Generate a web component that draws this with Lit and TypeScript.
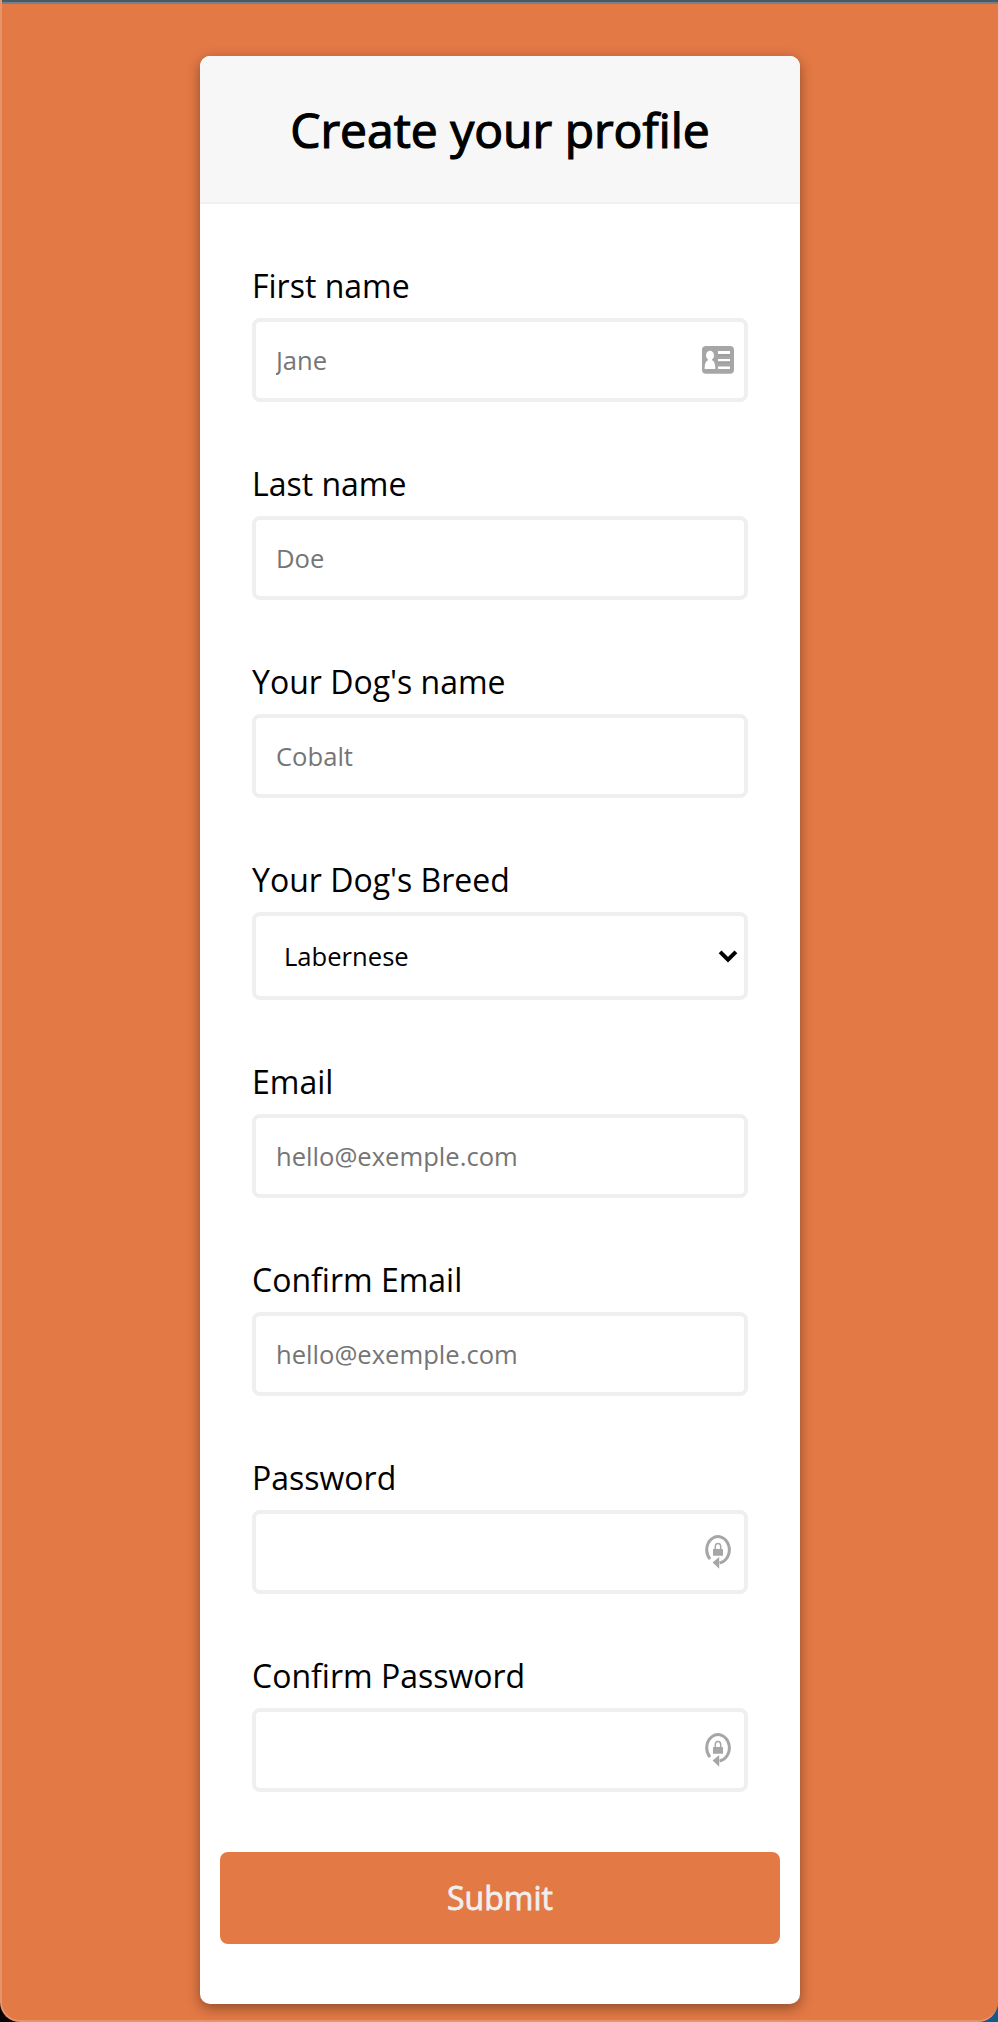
import { LitElement, html, css, svg, nothing } from "lit";
import { customElement, property } from "lit/decorators.js";

type IconName = "card" | "lock";

interface Field {
  label: string;
  type?: string;
  placeholder?: string;
  icon?: IconName;
  options?: string[];
}

const FIELDS: Field[] = [
  { label: "First name", placeholder: "Jane", icon: "card" },
  { label: "Last name", placeholder: "Doe" },
  { label: "Your Dog's name", placeholder: "Cobalt" },
  { label: "Your Dog's Breed", options: ["Labernese"] },
  { label: "Email", type: "email", placeholder: "hello@exemple.com" },
  { label: "Confirm Email", type: "email", placeholder: "hello@exemple.com" },
  { label: "Password", type: "password", icon: "lock" },
  { label: "Confirm Password", type: "password", icon: "lock" },
];

const cardIcon = svg`
  <rect x="0" y="3" width="32" height="27.700" rx="4" fill="#a6a6a6"/>
  <ellipse cx="8" cy="12.400" rx="4" ry="4.600" fill="#fff"/>
  <path d="M6 15h4v2.200c2 .8 3.200 3 3.400 8.800H2.600c.2-5.800 1.400-8 3.400-8.800z" fill="#fff"/>
  <path d="M16 8h12v3.200H16zM16 16h12v2.400H16zM16 23.500h12v2.500H16z" fill="#fff"/>
  <path d="M16 11.200h12v1.200H16zM16 18.400h12v1.100H16z" fill="#959595"/>`;

const lockIcon = svg`
  <path d="M8 24.100A11.300 13.200 0 1 1 17.500 27.900" fill="none" stroke="#a6a6a6" stroke-width="3"/>
  <path d="M10.600 27.500 17.200 22v11.700z" fill="#a6a6a6"/>
  <rect x="11" y="14" width="10" height="6.800" rx=".6" fill="#a6a6a6"/>
  <path d="M13.300 14.500v-3a2.700 3.100 0 0 1 5.400 0v3" fill="none" stroke="#a6a6a6" stroke-width="1.500"/>`;

@customElement("form-field")
class FormField extends LitElement {
  @property({ attribute: false }) field!: Field;

  static styles = css`
    :host { display: block; }
    .label { display: block; height: 44px; line-height: 44px; font-size: 32px; margin-bottom: 10px; color: #000; }
    .box {
      display: flex; align-items: center; box-sizing: border-box; height: 84px;
      border: 4px solid #efefef; border-radius: 8px; background: #fff; padding-right: 10px;
    }
    .box.tall { height: 88px; padding-right: 6px; }
    .control {
      flex: 1; min-width: 0; height: 100%; box-sizing: border-box; margin: 0; border: 0; outline: 0;
      background: transparent; padding: 1px 0 0 20px; font: 25.6px "Open Sans", sans-serif; color: #000;
      appearance: none; border-radius: 0;
    }
    .control.select { padding-left: 28px; }
    .control::placeholder { color: #757575; opacity: 1; }
    .icon { flex: none; display: block; width: 32px; height: 34px; }
    .chevron { flex: none; display: block; width: 20px; height: 14px; }
  `;

  private renderIcon(name: IconName) {
    return html`<svg class="icon" viewBox="0 0 32 34" aria-hidden="true">${name === "card" ? cardIcon : lockIcon}</svg>`;
  }

  render() {
    const { label, type, placeholder, icon, options } = this.field;
    return html`
      <label class="label" for="control">${label}</label>
      ${options
        ? html`<div class="box tall">
            <select id="control" class="control select">${options.map((o) => html`<option>${o}</option>`)}</select>
            <svg class="chevron" viewBox="0 0 20 14" aria-hidden="true">
              <path d="M2.100 2.900 10 10.700 17.900 2.900" fill="none" stroke="#000" stroke-width="4"/>
            </svg>
          </div>`
        : html`<div class="box">
            <input id="control" class="control" type=${type ?? "text"} placeholder=${placeholder ?? ""}>
            ${icon ? this.renderIcon(icon) : nothing}
          </div>`}
    `;
  }
}

@customElement("app-root")
class AppRoot extends LitElement {
  static styles = css`
    :host { display: block; font-family: "Open Sans", sans-serif; }
    .backdrop { background: linear-gradient(90deg, #0b0406 50%, #17588c 50%); }
    .window {
      box-sizing: border-box; height: 2022px; overflow: hidden; background: #e37945;
      border: 2px solid #e8946b; border-top: 0; border-right: 0; border-radius: 0 0 20px 20px;
      display: flex; flex-direction: column;
    }
    .edge { flex: none; height: 2px; margin-left: -2px; background: #4a5a65; }
    .edge.light { background: #74808a; }
    .card {
      width: 600px; height: 1948px; flex: none; margin: 52px 0 0 198px; box-sizing: border-box;
      background: #fff; border-radius: 10px; box-shadow: 0 4px 13px rgba(0, 0, 0, 0.38);
    }
    .header {
      box-sizing: border-box; height: 148px; display: flex; align-items: center; justify-content: center;
      padding-top: 2px; background: #f7f7f7; border-bottom: 2px solid #f0f0f0; border-radius: 10px 10px 0 0;
    }
    .title { margin: 0; font-size: 48px; font-weight: 400; line-height: 66px; color: #000; -webkit-text-stroke: 1.2px #000; }
    .fields { display: flex; flex-direction: column; gap: 60px; padding: 60px 52px; }
    .submit {
      display: block; width: 560px; height: 92px; margin: 0 20px; border: 0; border-radius: 8px; padding: 0 0 1px;
      background: #e37945; color: #efefef; font: 32px "Open Sans", sans-serif; -webkit-text-stroke: 0.8px #efefef;
    }
  `;

  render() {
    return html`
      <div class="backdrop">
        <main class="window">
          <div class="edge"></div>
          <div class="edge light"></div>
          <form class="card">
            <header class="header"><h1 class="title">Create your profile</h1></header>
            <div class="fields">${FIELDS.map((f) => html`<form-field .field=${f}></form-field>`)}</div>
            <button class="submit" type="button">Submit</button>
          </form>
        </main>
      </div>
    `;
  }
}
